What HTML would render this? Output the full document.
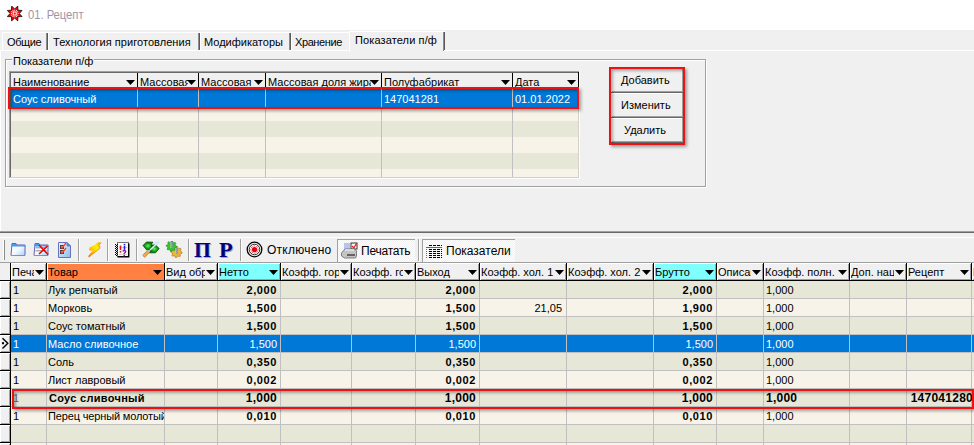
<!DOCTYPE html>
<html><head><meta charset="utf-8"><style>
html,body{margin:0;padding:0;width:974px;height:445px;overflow:hidden;background:#f0f0f0;position:relative}
body>div,body>svg{position:absolute}
.t{font-family:"Liberation Sans", sans-serif;font-size:11px;line-height:13px;white-space:nowrap;color:#000}
</style></head><body>
<div style="left:0px;top:0px;width:974px;height:30px;background:#fff"></div>
<svg style="left:7px;top:6px" width="16" height="16" viewBox="0 0 16 16">
<polygon points="4.64,0.11 7.70,2.90 10.76,0.11 10.95,4.25 15.09,4.44 12.30,7.50 15.09,10.56 10.95,10.75 10.76,14.89 7.70,12.10 4.64,14.89 4.45,10.75 0.31,10.56 3.10,7.50 0.31,4.44 4.45,4.25" fill="#f00" stroke="#000" stroke-width="0.75" stroke-linejoin="miter"/>
<rect x="10.60" y="7.00" width="1" height="1" fill="#fff"/><rect x="10.14" y="8.70" width="1" height="1" fill="#fff"/><rect x="8.90" y="9.94" width="1" height="1" fill="#fff"/><rect x="7.20" y="10.40" width="1" height="1" fill="#fff"/><rect x="5.50" y="9.94" width="1" height="1" fill="#fff"/><rect x="4.26" y="8.70" width="1" height="1" fill="#fff"/><rect x="3.80" y="7.00" width="1" height="1" fill="#fff"/><rect x="4.26" y="5.30" width="1" height="1" fill="#fff"/><rect x="5.50" y="4.06" width="1" height="1" fill="#fff"/><rect x="7.20" y="3.60" width="1" height="1" fill="#fff"/><rect x="8.90" y="4.06" width="1" height="1" fill="#fff"/><rect x="10.14" y="5.30" width="1" height="1" fill="#fff"/>
<rect x="6.2" y="6" width="3" height="3" fill="none" stroke="#fff" stroke-width="1"/>
</svg>
<div class="t" style="left:28px;top:8px;text-align:left;font-size:13px;color:#9d95a6;transform:scaleX(0.86);transform-origin:0 0">01. Рецепт</div>
<div style="left:0px;top:30px;width:974px;height:201px;background:#f0f0f0"></div>
<div style="left:2px;top:32px;width:46px;height:18px;background:#f0f0f0;border-top:1px solid #fff;border-left:1px solid #fff;box-sizing:border-box"></div>
<div style="left:46px;top:33px;width:1px;height:17px;background:#8c8c8c"></div>
<div style="left:47px;top:33px;width:1px;height:17px;background:#5a5a5a"></div>
<div class="t" style="left:7px;top:36px;text-align:left;font-size:11px;letter-spacing:-0.4px">Общие</div>
<div style="left:48px;top:32px;width:152px;height:18px;background:#f0f0f0;border-top:1px solid #fff;border-left:1px solid #fff;box-sizing:border-box"></div>
<div style="left:198px;top:33px;width:1px;height:17px;background:#8c8c8c"></div>
<div style="left:199px;top:33px;width:1px;height:17px;background:#5a5a5a"></div>
<div class="t" style="left:53px;top:36px;text-align:left;font-size:11px;letter-spacing:0.05px">Технология приготовления</div>
<div style="left:200px;top:32px;width:91px;height:18px;background:#f0f0f0;border-top:1px solid #fff;border-left:1px solid #fff;box-sizing:border-box"></div>
<div style="left:289px;top:33px;width:1px;height:17px;background:#8c8c8c"></div>
<div style="left:290px;top:33px;width:1px;height:17px;background:#5a5a5a"></div>
<div class="t" style="left:204px;top:36px;text-align:left;font-size:11px;letter-spacing:0px">Модификаторы</div>
<div style="left:291px;top:32px;width:60px;height:18px;background:#f0f0f0;border-top:1px solid #fff;border-left:1px solid #fff;box-sizing:border-box"></div>
<div class="t" style="left:295px;top:36px;text-align:left;font-size:11px;letter-spacing:-0.4px">Хранение</div>
<div style="left:349px;top:31px;width:96px;height:21px;background:#f0f0f0;border-top:1px solid #fff;border-left:1px solid #fff;box-sizing:border-box"></div>
<div style="left:443px;top:32px;width:1px;height:19px;background:#8c8c8c"></div>
<div style="left:444px;top:32px;width:1px;height:19px;background:#5a5a5a"></div>
<div class="t" style="left:355px;top:34px;text-align:left;font-size:11px;letter-spacing:0.12px">Показатели п/ф</div>
<div style="left:0px;top:50px;width:348px;height:1px;background:#fff"></div>
<div style="left:444px;top:50px;width:530px;height:1px;background:#fff"></div>
<div style="left:0px;top:50px;width:1px;height:181px;background:#fff"></div>
<div style="left:5px;top:59px;width:701px;height:128px;border:1px solid #a0a0a0;box-shadow:inset 1px 1px 0 #fff, 1px 1px 0 #fff;box-sizing:border-box"></div>
<div class="t" style="left:12px;top:55px;text-align:left;font-size:11px;background:#f0f0f0;padding:0 1px;line-height:12px">Показатели п/ф</div>
<div style="left:9px;top:71px;width:571px;height:108px;background:#f7f3e8"></div>
<div style="left:9px;top:71px;width:570px;height:1px;background:#a0a0a0"></div>
<div style="left:9px;top:71px;width:1px;height:107px;background:#a0a0a0"></div>
<div style="left:10px;top:72px;width:569px;height:1px;background:#696969"></div>
<div style="left:10px;top:72px;width:1px;height:106px;background:#696969"></div>
<div style="left:578px;top:72px;width:1px;height:106px;background:#d4d0c8"></div>
<div style="left:10px;top:177px;width:569px;height:1px;background:#d4d0c8"></div>
<div style="left:579px;top:71px;width:1px;height:108px;background:#fff"></div>
<div style="left:9px;top:178px;width:571px;height:1px;background:#fff"></div>
<div style="left:11px;top:73px;width:567px;height:15px;background:#f0f0f0"></div>
<div style="left:11px;top:105px;width:567px;height:16px;background:#f7f3e8"></div>
<div style="left:11px;top:121px;width:567px;height:16px;background:#e6e7d7"></div>
<div style="left:11px;top:137px;width:567px;height:16px;background:#f7f3e8"></div>
<div style="left:11px;top:153px;width:567px;height:16px;background:#e6e7d7"></div>
<div style="left:11px;top:169px;width:567px;height:8px;background:#f7f3e8"></div>
<div style="left:11px;top:89px;width:567px;height:18px;background:#0078d7"></div>
<div style="left:137px;top:89px;width:1px;height:88px;background:#c0c0c0"></div>
<div style="left:137px;top:73px;width:1px;height:16px;background:#000"></div>
<div style="left:198px;top:89px;width:1px;height:88px;background:#c0c0c0"></div>
<div style="left:198px;top:73px;width:1px;height:16px;background:#000"></div>
<div style="left:265px;top:89px;width:1px;height:88px;background:#c0c0c0"></div>
<div style="left:265px;top:73px;width:1px;height:16px;background:#000"></div>
<div style="left:381px;top:89px;width:1px;height:88px;background:#c0c0c0"></div>
<div style="left:381px;top:73px;width:1px;height:16px;background:#000"></div>
<div style="left:512px;top:89px;width:1px;height:88px;background:#c0c0c0"></div>
<div style="left:512px;top:73px;width:1px;height:16px;background:#000"></div>
<div class="t" style="left:13px;top:76px;width:114px;overflow:hidden;text-align:left;font-size:11px">Наименование</div>
<svg style="left:126px;top:80px" width="9" height="5"><polygon points="0,0 9,0 4.5,5" fill="#000"/></svg>
<div class="t" style="left:140px;top:76px;width:48px;overflow:hidden;text-align:left;font-size:11px">Массовая</div>
<svg style="left:187px;top:80px" width="9" height="5"><polygon points="0,0 9,0 4.5,5" fill="#000"/></svg>
<div class="t" style="left:201px;top:76px;width:54px;overflow:hidden;text-align:left;font-size:11px">Массовая</div>
<svg style="left:254px;top:80px" width="9" height="5"><polygon points="0,0 9,0 4.5,5" fill="#000"/></svg>
<div class="t" style="left:268px;top:76px;width:103px;overflow:hidden;text-align:left;font-size:11px">Массовая доля жира</div>
<svg style="left:370px;top:80px" width="9" height="5"><polygon points="0,0 9,0 4.5,5" fill="#000"/></svg>
<div class="t" style="left:384px;top:76px;width:118px;overflow:hidden;text-align:left;font-size:11px">Полуфабрикат</div>
<svg style="left:501px;top:80px" width="9" height="5"><polygon points="0,0 9,0 4.5,5" fill="#000"/></svg>
<div class="t" style="left:515px;top:76px;width:53px;overflow:hidden;text-align:left;font-size:11px">Дата</div>
<svg style="left:567px;top:80px" width="9" height="5"><polygon points="0,0 9,0 4.5,5" fill="#000"/></svg>
<div style="left:11px;top:88px;width:567px;height:1px;background:#000"></div>
<div style="left:578px;top:72px;width:1px;height:17px;background:#000"></div>
<div class="t" style="left:13px;top:93px;text-align:left;font-size:11px;color:#fff">Соус сливочный</div>
<div class="t" style="left:384px;top:93px;text-align:left;font-size:11px;color:#fff">147041281</div>
<div class="t" style="left:515px;top:93px;text-align:left;font-size:11px;color:#fff">01.01.2022</div>
<div style="left:8px;top:87px;width:571px;height:22px;border:2px solid #ee1111;box-sizing:border-box;box-shadow:2px 2px 3px rgba(0,0,0,0.35), inset 2px 2px 3px rgba(0,0,0,0.3)"></div>
<div style="left:611px;top:68px;width:72px;height:25px;background:#f0f0f0;box-shadow:inset 0 -1px 0 #696969, inset -1px 0 0 #a0a0a0, inset 1px 1px 0 #fff, inset 0 -2px 0 #a0a0a0"></div>
<div class="t" style="left:621px;top:74px;text-align:left;font-size:11px">Добавить</div>
<div style="left:611px;top:93px;width:72px;height:25px;background:#f0f0f0;box-shadow:inset 0 -1px 0 #696969, inset -1px 0 0 #a0a0a0, inset 1px 1px 0 #fff, inset 0 -2px 0 #a0a0a0"></div>
<div class="t" style="left:621px;top:99px;text-align:left;font-size:11px">Изменить</div>
<div style="left:611px;top:118px;width:72px;height:25px;background:#f0f0f0;box-shadow:inset 0 -1px 0 #696969, inset -1px 0 0 #a0a0a0, inset 1px 1px 0 #fff, inset 0 -2px 0 #a0a0a0"></div>
<div class="t" style="left:624px;top:124px;text-align:left;font-size:11px">Удалить</div>
<div style="left:609px;top:67px;width:76px;height:78px;border:2px solid #ee1111;box-sizing:border-box;box-shadow:2px 2px 3px rgba(0,0,0,0.35), inset 2px 2px 3px rgba(0,0,0,0.3)"></div>
<div style="left:0px;top:231px;width:974px;height:1px;background:#a0a0a0"></div>
<div style="left:0px;top:232px;width:974px;height:1px;background:#696969"></div>
<div style="left:0px;top:233px;width:974px;height:212px;background:#f0f0f0"></div>
<div style="left:0px;top:237px;width:974px;height:1px;background:#fff"></div>
<div style="left:3px;top:240px;width:1px;height:20px;background:#fff"></div>
<div style="left:4px;top:240px;width:1px;height:20px;background:#8c8c8c"></div>
<div style="left:78px;top:239px;width:1px;height:22px;background:#a0a0a0"></div>
<div style="left:79px;top:239px;width:1px;height:22px;background:#fff"></div>
<div style="left:107px;top:239px;width:1px;height:22px;background:#a0a0a0"></div>
<div style="left:108px;top:239px;width:1px;height:22px;background:#fff"></div>
<div style="left:136px;top:239px;width:1px;height:22px;background:#a0a0a0"></div>
<div style="left:137px;top:239px;width:1px;height:22px;background:#fff"></div>
<div style="left:188px;top:239px;width:1px;height:22px;background:#a0a0a0"></div>
<div style="left:189px;top:239px;width:1px;height:22px;background:#fff"></div>
<div style="left:240px;top:239px;width:1px;height:22px;background:#a0a0a0"></div>
<div style="left:241px;top:239px;width:1px;height:22px;background:#fff"></div>
<div style="left:418px;top:239px;width:1px;height:22px;background:#a0a0a0"></div>
<div style="left:419px;top:239px;width:1px;height:22px;background:#fff"></div>
<svg style="left:10px;top:243px" width="17" height="13" viewBox="0 0 16 13">
<defs><linearGradient id="fg" x1="0" y1="0" x2="1" y2="1"><stop offset="0" stop-color="#fff"/><stop offset="0.5" stop-color="#f4f9ff"/><stop offset="1" stop-color="#a8d2f6"/></linearGradient></defs>
<path d="M1.5,1 v-0.5 h4 l1,1.5 h8 v10 a0.8,0.8 0 0 1 -0.8,0.8 h-12.4 a0.8,0.8 0 0 1 -0.8,-0.8 z" fill="url(#fg)" stroke="#6a60b4" stroke-width="1"/>
<rect x="1" y="1" width="4.5" height="1.5" fill="#3f9cf4"/>
<rect x="1" y="2" width="14" height="1.5" fill="#3f9cf4"/>
</svg>
<svg style="left:33px;top:243px" width="17" height="13" viewBox="0 0 16 13">
<path d="M1.5,1 v-0.5 h4 l1,1.5 h8 v10 a0.8,0.8 0 0 1 -0.8,0.8 h-12.4 a0.8,0.8 0 0 1 -0.8,-0.8 z" fill="url(#fg)" stroke="#6a60b4" stroke-width="1"/>
<rect x="1" y="1" width="4.5" height="1.5" fill="#3f9cf4"/>
<rect x="1" y="2" width="14" height="1.5" fill="#3f9cf4"/>
<path d="M2,4.8 h11 M2,7.8 h11" stroke="#8a8a8a" stroke-width="1"/>
<path d="M5.5,2 L14.5,11.5 M14,3 L5.5,11" stroke="#e80000" stroke-width="1.5"/>
</svg>
<svg style="left:58px;top:242px" width="14" height="16" viewBox="0 0 14 16">
<defs><linearGradient id="dg" x1="0" y1="0" x2="1" y2="1"><stop offset="0" stop-color="#eef6ff"/><stop offset="1" stop-color="#86bfec"/></linearGradient></defs>
<path d="M0.5,0.5 h8.5 l3.5,3.5 v11.5 h-12 z" fill="url(#dg)" stroke="#6a70c0" stroke-width="1"/>
<path d="M9,0.5 v3.5 h3.5 z" fill="#4a8ee8" stroke="#6a70c0" stroke-width="0.8"/>
<rect x="2.5" y="3.5" width="3" height="3" fill="#ddd" stroke="#404040" stroke-width="1"/>
<rect x="2.5" y="8.5" width="3" height="3" fill="#ddd" stroke="#404040" stroke-width="1"/>
<path d="M3,4.5 l1.2,1.5 l3.8,-5 M3,9.5 l1.2,1.5 l3.8,-5" stroke="#ff4020" stroke-width="1.3" fill="none"/>
</svg>
<svg style="left:87px;top:242px" width="15" height="16" viewBox="0 0 15 16">
<defs><linearGradient id="lg" x1="1" y1="0" x2="0" y2="1"><stop offset="0" stop-color="#ff9a10"/><stop offset="0.3" stop-color="#fff000"/><stop offset="0.5" stop-color="#ffd800"/><stop offset="1" stop-color="#ff6a00"/></linearGradient></defs>
<path d="M11,0.3 L14,0.5 L11.5,4 L13,4.6 L12.5,6.8 L8,10.2 L1.8,15.2 L1.2,14 L5.8,8.6 L2.2,8.4 L2.4,5.6 L7.5,3 Z" fill="url(#lg)"/>
<path d="M14,0.5 L11.5,4 L13,4.6 L12.5,6.8 L8,10.2 L1.8,15.2" stroke="#e06a00" stroke-width="0.8" fill="none" opacity="0.7"/>
</svg>
<svg style="left:114px;top:241px" width="17" height="17" viewBox="0 0 17 17">
<rect x="3.5" y="1.5" width="11" height="14" fill="#fff" stroke="#777" stroke-width="1"/>
<path d="M14.7,2.5 V15.7 H3.5" stroke="#000" stroke-width="1.5" fill="none"/>
<path d="M1.5,3 V15" stroke="#000" stroke-width="1" stroke-dasharray="1 1"/>
<path d="M2.5,3 V15" stroke="#000" stroke-width="1" stroke-dasharray="1 1" stroke-dashoffset="1"/>
<path d="M3.5,3 V15" stroke="#000" stroke-width="1" stroke-dasharray="1 1"/>
<path d="M5,6.5 h8 M5,13.5 h8" stroke="#d0d0d0" stroke-width="1"/>
<path d="M6.5,4.5 v4.5" stroke="#f01010" stroke-width="1.6"/><rect x="5.7" y="10" width="1.6" height="1.6" fill="#f01010"/>
<rect x="9.7" y="2.8" width="1.6" height="1.6" fill="#1020f0"/><path d="M10.5,5 v3.8" stroke="#1020f0" stroke-width="1.6"/>
<path d="M8.6,10.3 q1.8,-1.6 3.1,0 q0,1.3 -1.5,2 v0.9" stroke="#9010a0" stroke-width="1.3" fill="none"/><rect x="9.5" y="14" width="1.5" height="1.5" fill="#9010a0"/>
</svg>
<svg style="left:142px;top:241px" width="18" height="17" viewBox="0 0 18 17">
<defs><radialGradient id="gg" cx="0.5" cy="0.5" r="0.5"><stop offset="0" stop-color="#70f070"/><stop offset="0.5" stop-color="#20b020"/><stop offset="1" stop-color="#066006"/></radialGradient></defs>
<path d="M1.5,15.5 L6.5,10.5" stroke="#c07428" stroke-width="3.2"/>
<path d="M1.5,15.5 L6.5,10.5" stroke="#f8aa50" stroke-width="2"/>
<path d="M7,8.5 L15.5,1.8" stroke="#cfe6ff" stroke-width="3.5" stroke-linecap="round"/>
<path d="M1,4.5 L4.5,1 L11,1.2 L9.5,3 L9,8.8 L4.5,8.8 Z" fill="url(#gg)" stroke="#055505" stroke-width="0.8" stroke-linejoin="round"/>
<path d="M17.2,7.5 L13.5,11.8 L7.5,11.8 L8.5,10 L9.5,4 L13.5,4 Z" fill="url(#gg)" stroke="#055505" stroke-width="0.8" stroke-linejoin="round"/>
<path d="M8.5,8.5 L14.5,3" stroke="#d8ecff" stroke-width="1.6" stroke-linecap="round"/>
</svg>
<svg style="left:165px;top:241px" width="19" height="17" viewBox="0 0 19 17">
<polygon points="17.10,11.20 16.99,12.29 15.47,12.85 15.08,13.59 15.46,15.16 14.61,15.86 13.15,15.17 12.34,15.42 11.50,16.80 10.41,16.69 9.85,15.17 9.11,14.78 7.54,15.16 6.84,14.31 7.53,12.85 7.28,12.04 5.90,11.20 6.01,10.11 7.53,9.55 7.92,8.81 7.54,7.24 8.39,6.54 9.85,7.23 10.66,6.98 11.50,5.60 12.59,5.71 13.15,7.23 13.89,7.62 15.46,7.24 16.16,8.09 15.47,9.55 15.72,10.36" fill="#e8b43a" stroke="#b0701a" stroke-width="0.6"/>
<polygon points="11.80,5.20 11.70,6.23 10.20,6.73 9.83,7.42 10.25,8.95 9.44,9.61 8.03,8.90 7.28,9.12 6.50,10.50 5.47,10.40 4.97,8.90 4.28,8.53 2.75,8.95 2.09,8.14 2.80,6.73 2.58,5.98 1.20,5.20 1.30,4.17 2.80,3.67 3.17,2.98 2.75,1.45 3.56,0.79 4.97,1.50 5.72,1.28 6.50,-0.10 7.53,0.00 8.03,1.50 8.72,1.87 10.25,1.45 10.91,2.26 10.20,3.67 10.42,4.42" fill="#36c236" stroke="#1a8a1a" stroke-width="0.6"/>
<rect x="5.5" y="1" width="2" height="6" fill="#c8c8d8"/><rect x="6.5" y="1" width="1" height="6" fill="#707088"/>
<rect x="10.5" y="7" width="2" height="6" fill="#c8c8d8"/><rect x="11.5" y="7" width="1" height="6" fill="#707088"/>
</svg>
<div class="t" style="left:194px;top:240px;text-align:left;font-family:'Liberation Serif',serif;font-weight:bold;font-size:20px;color:#000080;line-height:20px;text-shadow:1px 1px 0 #a8a8b8;transform:scaleX(1.08);transform-origin:0 0">П</div>
<div class="t" style="left:219px;top:240px;text-align:left;font-family:'Liberation Serif',serif;font-weight:bold;font-size:20px;transform:scaleX(1.12);transform-origin:0 0;color:#000080;line-height:20px;text-shadow:1px 1px 0 #a8a8b8">P</div>
<svg style="left:246px;top:241px" width="17" height="17" viewBox="0 0 17 17">
<circle cx="8.5" cy="8.5" r="7.3" fill="#fff" stroke="#000" stroke-width="1.3"/>
<circle cx="8.5" cy="8.5" r="5.3" fill="#fff" stroke="#222" stroke-width="1"/>
<circle cx="8.5" cy="8.5" r="3.6" fill="none" stroke="#e00" stroke-width="0.9" stroke-dasharray="1 0.8"/>
<circle cx="8.5" cy="8.5" r="2.6" fill="#e80010"/>
</svg>
<div class="t" style="left:267px;top:244px;text-align:left;font-size:12px;letter-spacing:0.25px">Отключено</div>
<div style="left:337px;top:239px;width:78px;height:23px;background:repeating-conic-gradient(#fff 0 25%, #f0f0f0 0 50%) 0 0/2px 2px;border-top:1px solid #a0a0a0;border-left:1px solid #a0a0a0;box-sizing:border-box"></div>
<svg style="left:341px;top:242px" width="17" height="17" viewBox="0 0 17 17">
<rect x="3" y="1" width="6" height="6" fill="#b8c4f0"/>
<rect x="10" y="1" width="6" height="6" fill="#fff" stroke="#333" stroke-width="1"/>
<path d="M11,4 l1.8,2 l3,-5" stroke="#e02020" stroke-width="1.3" fill="none"/>
<path d="M0.5,11 L4,7 h10 l1.5,2 v5 l-1,2 h-11 l-3,-2 z" fill="#c4c4c4" stroke="#666" stroke-width="0.8"/>
<path d="M4,8 h9" stroke="#e8e8e8" stroke-width="1.5"/>
<path d="M6,13 h8" stroke="#444" stroke-width="1.5"/>
</svg>
<div class="t" style="left:361px;top:245px;text-align:left;font-size:12px;letter-spacing:-0.22px">Печатать</div>
<div style="left:422px;top:239px;width:93px;height:23px;background:repeating-conic-gradient(#fff 0 25%, #f0f0f0 0 50%) 0 0/2px 2px;border-top:1px solid #a0a0a0;border-left:1px solid #a0a0a0;box-sizing:border-box"></div>
<svg style="left:426px;top:245px" width="16" height="14" viewBox="0 0 16 14">
<path d="M3,0.5 h13 M3,4.5 h13 M3,6.5 h13 M3,8.5 h13 M3,10.5 h13 M3,12.5 h13" stroke="#000" stroke-width="1" stroke-dasharray="3 1"/>
<path d="M0,2.5 h16" stroke="#2070e0" stroke-width="1"/>
<path d="M0.5,4 v10" stroke="#2070e0" stroke-width="1" stroke-dasharray="1 1"/>
</svg>
<div class="t" style="left:446px;top:245px;text-align:left;font-size:12px;letter-spacing:0px">Показатели</div>
<div style="left:0px;top:262px;width:974px;height:1px;background:#a0a0a0"></div>
<div style="left:0px;top:263px;width:974px;height:182px;background:#f7f3e8"></div>
<div style="left:0px;top:263px;width:10px;height:182px;background:#f0f0f0"></div>
<div style="left:11px;top:281px;width:963px;height:17px;background:#e6e7d7"></div>
<div style="left:11px;top:298px;width:963px;height:1px;background:#c0c0c0"></div>
<div style="left:0px;top:281px;width:10px;height:17px;background:#f0f0f0;box-shadow:inset 1px 1px 0 #fff, inset -1px -1px 0 #a0a0a0"></div>
<div style="left:0px;top:298px;width:10px;height:1px;background:#000"></div>
<div style="left:11px;top:299px;width:963px;height:17px;background:#f7f3e8"></div>
<div style="left:11px;top:316px;width:963px;height:1px;background:#c0c0c0"></div>
<div style="left:0px;top:299px;width:10px;height:17px;background:#f0f0f0;box-shadow:inset 1px 1px 0 #fff, inset -1px -1px 0 #a0a0a0"></div>
<div style="left:0px;top:316px;width:10px;height:1px;background:#000"></div>
<div style="left:11px;top:317px;width:963px;height:17px;background:#e6e7d7"></div>
<div style="left:11px;top:334px;width:963px;height:1px;background:#c0c0c0"></div>
<div style="left:0px;top:317px;width:10px;height:17px;background:#f0f0f0;box-shadow:inset 1px 1px 0 #fff, inset -1px -1px 0 #a0a0a0"></div>
<div style="left:0px;top:334px;width:10px;height:1px;background:#000"></div>
<div style="left:11px;top:335px;width:963px;height:17px;background:#f7f3e8"></div>
<div style="left:11px;top:352px;width:963px;height:1px;background:#c0c0c0"></div>
<div style="left:0px;top:335px;width:10px;height:17px;background:#f0f0f0;box-shadow:inset 1px 1px 0 #fff, inset -1px -1px 0 #a0a0a0"></div>
<div style="left:0px;top:352px;width:10px;height:1px;background:#000"></div>
<div style="left:11px;top:353px;width:963px;height:17px;background:#e6e7d7"></div>
<div style="left:11px;top:370px;width:963px;height:1px;background:#c0c0c0"></div>
<div style="left:0px;top:353px;width:10px;height:17px;background:#f0f0f0;box-shadow:inset 1px 1px 0 #fff, inset -1px -1px 0 #a0a0a0"></div>
<div style="left:0px;top:370px;width:10px;height:1px;background:#000"></div>
<div style="left:11px;top:371px;width:963px;height:17px;background:#f7f3e8"></div>
<div style="left:11px;top:388px;width:963px;height:1px;background:#c0c0c0"></div>
<div style="left:0px;top:371px;width:10px;height:17px;background:#f0f0f0;box-shadow:inset 1px 1px 0 #fff, inset -1px -1px 0 #a0a0a0"></div>
<div style="left:0px;top:388px;width:10px;height:1px;background:#000"></div>
<div style="left:11px;top:389px;width:963px;height:17px;background:#e6e7d7"></div>
<div style="left:11px;top:406px;width:963px;height:1px;background:#c0c0c0"></div>
<div style="left:0px;top:389px;width:10px;height:17px;background:#f0f0f0;box-shadow:inset 1px 1px 0 #fff, inset -1px -1px 0 #a0a0a0"></div>
<div style="left:0px;top:406px;width:10px;height:1px;background:#000"></div>
<div style="left:11px;top:407px;width:963px;height:17px;background:#f7f3e8"></div>
<div style="left:11px;top:424px;width:963px;height:1px;background:#c0c0c0"></div>
<div style="left:0px;top:407px;width:10px;height:17px;background:#f0f0f0;box-shadow:inset 1px 1px 0 #fff, inset -1px -1px 0 #a0a0a0"></div>
<div style="left:0px;top:424px;width:10px;height:1px;background:#000"></div>
<div style="left:11px;top:425px;width:963px;height:17px;background:#e6e7d7"></div>
<div style="left:11px;top:442px;width:963px;height:1px;background:#c0c0c0"></div>
<div style="left:0px;top:425px;width:10px;height:17px;background:#f0f0f0;box-shadow:inset 1px 1px 0 #fff, inset -1px -1px 0 #a0a0a0"></div>
<div style="left:0px;top:442px;width:10px;height:1px;background:#000"></div>
<div style="left:11px;top:443px;width:963px;height:17px;background:#f7f3e8"></div>
<div style="left:11px;top:460px;width:963px;height:1px;background:#c0c0c0"></div>
<div style="left:0px;top:443px;width:10px;height:17px;background:#f0f0f0;box-shadow:inset 1px 1px 0 #fff, inset -1px -1px 0 #a0a0a0"></div>
<div style="left:0px;top:460px;width:10px;height:1px;background:#000"></div>
<div style="left:11px;top:335px;width:963px;height:17px;background:#0078d7"></div>
<div style="left:11px;top:263px;width:35px;height:17px;background:#f0f0f0;box-shadow:inset 1px 1px 0 #fff, inset -1px -1px 0 #a0a0a0"></div>
<div class="t" style="left:12px;top:266px;width:22px;overflow:hidden;text-align:left;font-size:11px">Печать</div>
<svg style="left:35px;top:270px" width="9" height="5"><polygon points="0,0 9,0 4.5,5" fill="#000"/></svg>
<div style="left:47px;top:263px;width:117px;height:17px;background:#ff8040;box-shadow:inset 1px 1px 0 #fff, inset -1px -1px 0 #a0a0a0"></div>
<div style="left:46px;top:263px;width:1px;height:17px;background:#000"></div>
<div style="left:46px;top:281px;width:1px;height:164px;background:#c0c0c0"></div>
<div class="t" style="left:48px;top:266px;width:104px;overflow:hidden;text-align:left;font-size:11px">Товар</div>
<svg style="left:153px;top:270px" width="9" height="5"><polygon points="0,0 9,0 4.5,5" fill="#000"/></svg>
<div style="left:165px;top:263px;width:52px;height:17px;background:#f0f0f0;box-shadow:inset 1px 1px 0 #fff, inset -1px -1px 0 #a0a0a0"></div>
<div style="left:164px;top:263px;width:1px;height:17px;background:#000"></div>
<div style="left:164px;top:281px;width:1px;height:164px;background:#c0c0c0"></div>
<div class="t" style="left:166px;top:266px;width:39px;overflow:hidden;text-align:left;font-size:11px">Вид обработки</div>
<svg style="left:206px;top:270px" width="9" height="5"><polygon points="0,0 9,0 4.5,5" fill="#000"/></svg>
<div style="left:218px;top:263px;width:62px;height:17px;background:#80ffff;box-shadow:inset 1px 1px 0 #fff, inset -1px -1px 0 #a0a0a0"></div>
<div style="left:217px;top:263px;width:1px;height:17px;background:#000"></div>
<div style="left:217px;top:281px;width:1px;height:164px;background:#c0c0c0"></div>
<div class="t" style="left:219px;top:266px;width:49px;overflow:hidden;text-align:left;font-size:11px">Нетто</div>
<svg style="left:269px;top:270px" width="9" height="5"><polygon points="0,0 9,0 4.5,5" fill="#000"/></svg>
<div style="left:281px;top:263px;width:70px;height:17px;background:#f0f0f0;box-shadow:inset 1px 1px 0 #fff, inset -1px -1px 0 #a0a0a0"></div>
<div style="left:280px;top:263px;width:1px;height:17px;background:#000"></div>
<div style="left:280px;top:281px;width:1px;height:164px;background:#c0c0c0"></div>
<div class="t" style="left:282px;top:266px;width:57px;overflow:hidden;text-align:left;font-size:11px">Коэфф. горячей</div>
<svg style="left:340px;top:270px" width="9" height="5"><polygon points="0,0 9,0 4.5,5" fill="#000"/></svg>
<div style="left:352px;top:263px;width:63px;height:17px;background:#f0f0f0;box-shadow:inset 1px 1px 0 #fff, inset -1px -1px 0 #a0a0a0"></div>
<div style="left:351px;top:263px;width:1px;height:17px;background:#000"></div>
<div style="left:351px;top:281px;width:1px;height:164px;background:#c0c0c0"></div>
<div class="t" style="left:353px;top:266px;width:50px;overflow:hidden;text-align:left;font-size:11px">Коэфф. гор</div>
<svg style="left:404px;top:270px" width="9" height="5"><polygon points="0,0 9,0 4.5,5" fill="#000"/></svg>
<div style="left:416px;top:263px;width:63px;height:17px;background:#f0f0f0;box-shadow:inset 1px 1px 0 #fff, inset -1px -1px 0 #a0a0a0"></div>
<div style="left:415px;top:263px;width:1px;height:17px;background:#000"></div>
<div style="left:415px;top:281px;width:1px;height:164px;background:#c0c0c0"></div>
<div class="t" style="left:417px;top:266px;width:50px;overflow:hidden;text-align:left;font-size:11px">Выход</div>
<svg style="left:468px;top:270px" width="9" height="5"><polygon points="0,0 9,0 4.5,5" fill="#000"/></svg>
<div style="left:480px;top:263px;width:86px;height:17px;background:#f0f0f0;box-shadow:inset 1px 1px 0 #fff, inset -1px -1px 0 #a0a0a0"></div>
<div style="left:479px;top:263px;width:1px;height:17px;background:#000"></div>
<div style="left:479px;top:281px;width:1px;height:164px;background:#c0c0c0"></div>
<div class="t" style="left:481px;top:266px;width:73px;overflow:hidden;text-align:left;font-size:11px">Коэфф. хол. 1</div>
<svg style="left:555px;top:270px" width="9" height="5"><polygon points="0,0 9,0 4.5,5" fill="#000"/></svg>
<div style="left:567px;top:263px;width:86px;height:17px;background:#f0f0f0;box-shadow:inset 1px 1px 0 #fff, inset -1px -1px 0 #a0a0a0"></div>
<div style="left:566px;top:263px;width:1px;height:17px;background:#000"></div>
<div style="left:566px;top:281px;width:1px;height:164px;background:#c0c0c0"></div>
<div class="t" style="left:568px;top:266px;width:73px;overflow:hidden;text-align:left;font-size:11px">Коэфф. хол. 2</div>
<svg style="left:642px;top:270px" width="9" height="5"><polygon points="0,0 9,0 4.5,5" fill="#000"/></svg>
<div style="left:654px;top:263px;width:62px;height:17px;background:#80ffff;box-shadow:inset 1px 1px 0 #fff, inset -1px -1px 0 #a0a0a0"></div>
<div style="left:653px;top:263px;width:1px;height:17px;background:#000"></div>
<div style="left:653px;top:281px;width:1px;height:164px;background:#c0c0c0"></div>
<div class="t" style="left:655px;top:266px;width:49px;overflow:hidden;text-align:left;font-size:11px">Брутто</div>
<svg style="left:705px;top:270px" width="9" height="5"><polygon points="0,0 9,0 4.5,5" fill="#000"/></svg>
<div style="left:717px;top:263px;width:46px;height:17px;background:#f0f0f0;box-shadow:inset 1px 1px 0 #fff, inset -1px -1px 0 #a0a0a0"></div>
<div style="left:716px;top:263px;width:1px;height:17px;background:#000"></div>
<div style="left:716px;top:281px;width:1px;height:164px;background:#c0c0c0"></div>
<div class="t" style="left:718px;top:266px;width:33px;overflow:hidden;text-align:left;font-size:11px">Описание</div>
<svg style="left:752px;top:270px" width="9" height="5"><polygon points="0,0 9,0 4.5,5" fill="#000"/></svg>
<div style="left:764px;top:263px;width:85px;height:17px;background:#f0f0f0;box-shadow:inset 1px 1px 0 #fff, inset -1px -1px 0 #a0a0a0"></div>
<div style="left:763px;top:263px;width:1px;height:17px;background:#000"></div>
<div style="left:763px;top:281px;width:1px;height:164px;background:#c0c0c0"></div>
<div class="t" style="left:765px;top:266px;width:72px;overflow:hidden;text-align:left;font-size:11px">Коэфф. полн.</div>
<svg style="left:838px;top:270px" width="9" height="5"><polygon points="0,0 9,0 4.5,5" fill="#000"/></svg>
<div style="left:850px;top:263px;width:56px;height:17px;background:#f0f0f0;box-shadow:inset 1px 1px 0 #fff, inset -1px -1px 0 #a0a0a0"></div>
<div style="left:849px;top:263px;width:1px;height:17px;background:#000"></div>
<div style="left:849px;top:281px;width:1px;height:164px;background:#c0c0c0"></div>
<div class="t" style="left:851px;top:266px;width:43px;overflow:hidden;text-align:left;font-size:11px">Доп. наценка</div>
<svg style="left:895px;top:270px" width="9" height="5"><polygon points="0,0 9,0 4.5,5" fill="#000"/></svg>
<div style="left:907px;top:263px;width:64px;height:17px;background:#f0f0f0;box-shadow:inset 1px 1px 0 #fff, inset -1px -1px 0 #a0a0a0"></div>
<div style="left:906px;top:263px;width:1px;height:17px;background:#000"></div>
<div style="left:906px;top:281px;width:1px;height:164px;background:#c0c0c0"></div>
<div class="t" style="left:908px;top:266px;width:51px;overflow:hidden;text-align:left;font-size:11px">Рецепт</div>
<svg style="left:960px;top:270px" width="9" height="5"><polygon points="0,0 9,0 4.5,5" fill="#000"/></svg>
<div style="left:972px;top:263px;width:28px;height:17px;background:#f0f0f0;box-shadow:inset 1px 1px 0 #fff, inset -1px -1px 0 #a0a0a0"></div>
<div style="left:971px;top:263px;width:1px;height:17px;background:#000"></div>
<div style="left:971px;top:281px;width:1px;height:164px;background:#c0c0c0"></div>
<div class="t" style="left:973px;top:266px;width:15px;overflow:hidden;text-align:left;font-size:11px">Ещё</div>
<svg style="left:989px;top:270px" width="9" height="5"><polygon points="0,0 9,0 4.5,5" fill="#000"/></svg>
<div style="left:10px;top:263px;width:1px;height:182px;background:#000"></div>
<div style="left:0px;top:280px;width:974px;height:1px;background:#000"></div>
<div class="t" style="left:13px;top:284px;text-align:left;font-size:11px;color:#000">1</div>
<div class="t" style="left:48px;top:284px;width:116px;overflow:hidden;text-align:left;font-size:11px;color:#000;letter-spacing:0px">Лук репчатый</div>
<div class="t" style="left:217px;top:284px;width:60px;text-align:right;font-size:11px;font-weight:bold;letter-spacing:0.6px;color:#000">2,000</div>
<div class="t" style="left:415px;top:284px;width:61px;text-align:right;font-size:11px;font-weight:bold;letter-spacing:0.6px;color:#000">2,000</div>
<div class="t" style="left:653px;top:284px;width:60px;text-align:right;font-size:11px;font-weight:bold;letter-spacing:0.6px;color:#000">2,000</div>
<div class="t" style="left:766px;top:284px;text-align:left;font-size:11px;color:#000">1,000</div>
<div class="t" style="left:13px;top:302px;text-align:left;font-size:11px;color:#000">1</div>
<div class="t" style="left:48px;top:302px;width:116px;overflow:hidden;text-align:left;font-size:11px;color:#000;letter-spacing:0px">Морковь</div>
<div class="t" style="left:217px;top:302px;width:60px;text-align:right;font-size:11px;font-weight:bold;letter-spacing:0.6px;color:#000">1,500</div>
<div class="t" style="left:415px;top:302px;width:61px;text-align:right;font-size:11px;font-weight:bold;letter-spacing:0.6px;color:#000">1,500</div>
<div class="t" style="left:653px;top:302px;width:60px;text-align:right;font-size:11px;font-weight:bold;letter-spacing:0.6px;color:#000">1,900</div>
<div class="t" style="left:479px;top:302px;width:83px;text-align:right;font-size:11px;color:#000">21,05</div>
<div class="t" style="left:766px;top:302px;text-align:left;font-size:11px;color:#000">1,000</div>
<div class="t" style="left:13px;top:320px;text-align:left;font-size:11px;color:#000">1</div>
<div class="t" style="left:48px;top:320px;width:116px;overflow:hidden;text-align:left;font-size:11px;color:#000;letter-spacing:0px">Соус томатный</div>
<div class="t" style="left:217px;top:320px;width:60px;text-align:right;font-size:11px;font-weight:bold;letter-spacing:0.6px;color:#000">1,500</div>
<div class="t" style="left:415px;top:320px;width:61px;text-align:right;font-size:11px;font-weight:bold;letter-spacing:0.6px;color:#000">1,500</div>
<div class="t" style="left:653px;top:320px;width:60px;text-align:right;font-size:11px;font-weight:bold;letter-spacing:0.6px;color:#000">1,500</div>
<div class="t" style="left:766px;top:320px;text-align:left;font-size:11px;color:#000">1,000</div>
<div class="t" style="left:13px;top:338px;text-align:left;font-size:11px;color:#fff">1</div>
<div class="t" style="left:48px;top:338px;width:116px;overflow:hidden;text-align:left;font-size:11px;color:#fff;letter-spacing:0px">Масло сливочное</div>
<div class="t" style="left:217px;top:338px;width:60px;text-align:right;font-size:11px;color:#fff">1,500</div>
<div class="t" style="left:415px;top:338px;width:61px;text-align:right;font-size:11px;color:#fff">1,500</div>
<div class="t" style="left:653px;top:338px;width:60px;text-align:right;font-size:11px;color:#fff">1,500</div>
<div class="t" style="left:766px;top:338px;text-align:left;font-size:11px;color:#fff">1,000</div>
<div class="t" style="left:13px;top:356px;text-align:left;font-size:11px;color:#000">1</div>
<div class="t" style="left:48px;top:356px;width:116px;overflow:hidden;text-align:left;font-size:11px;color:#000;letter-spacing:0px">Соль</div>
<div class="t" style="left:217px;top:356px;width:60px;text-align:right;font-size:11px;font-weight:bold;letter-spacing:0.6px;color:#000">0,350</div>
<div class="t" style="left:415px;top:356px;width:61px;text-align:right;font-size:11px;font-weight:bold;letter-spacing:0.6px;color:#000">0,350</div>
<div class="t" style="left:653px;top:356px;width:60px;text-align:right;font-size:11px;font-weight:bold;letter-spacing:0.6px;color:#000">0,350</div>
<div class="t" style="left:766px;top:356px;text-align:left;font-size:11px;color:#000">1,000</div>
<div class="t" style="left:13px;top:374px;text-align:left;font-size:11px;color:#000">1</div>
<div class="t" style="left:48px;top:374px;width:116px;overflow:hidden;text-align:left;font-size:11px;color:#000;letter-spacing:0px">Лист лавровый</div>
<div class="t" style="left:217px;top:374px;width:60px;text-align:right;font-size:11px;font-weight:bold;letter-spacing:0.6px;color:#000">0,002</div>
<div class="t" style="left:415px;top:374px;width:61px;text-align:right;font-size:11px;font-weight:bold;letter-spacing:0.6px;color:#000">0,002</div>
<div class="t" style="left:653px;top:374px;width:60px;text-align:right;font-size:11px;font-weight:bold;letter-spacing:0.6px;color:#000">0,002</div>
<div class="t" style="left:766px;top:374px;text-align:left;font-size:11px;color:#000">1,000</div>
<div class="t" style="left:13px;top:392px;text-align:left;font-size:11px;color:#6a6a8a">1</div>
<div class="t" style="left:49px;top:392px;text-align:left;font-size:11px;font-weight:bold;letter-spacing:0.3px">Соус сливочный</div>
<div class="t" style="left:217px;top:392px;width:60px;text-align:right;font-size:12px;font-weight:bold;letter-spacing:0.25px">1,000</div>
<div class="t" style="left:415px;top:392px;width:61px;text-align:right;font-size:12px;font-weight:bold;letter-spacing:0.25px">1,000</div>
<div class="t" style="left:653px;top:392px;width:60px;text-align:right;font-size:12px;font-weight:bold;letter-spacing:0.25px">1,000</div>
<div class="t" style="left:766px;top:392px;text-align:left;font-size:12px;font-weight:bold;letter-spacing:0.25px">1,000</div>
<div class="t" style="left:904px;top:392px;width:69px;text-align:right;font-size:12px;font-weight:bold;letter-spacing:0.25px">147041280</div>
<div class="t" style="left:13px;top:410px;text-align:left;font-size:11px;color:#000">1</div>
<div class="t" style="left:48px;top:410px;width:116px;overflow:hidden;text-align:left;font-size:11px;color:#000;letter-spacing:-0.15px">Перец черный молотый</div>
<div class="t" style="left:217px;top:410px;width:60px;text-align:right;font-size:11px;font-weight:bold;letter-spacing:0.6px;color:#000">0,010</div>
<div class="t" style="left:415px;top:410px;width:61px;text-align:right;font-size:11px;font-weight:bold;letter-spacing:0.6px;color:#000">0,010</div>
<div class="t" style="left:653px;top:410px;width:60px;text-align:right;font-size:11px;font-weight:bold;letter-spacing:0.6px;color:#000">0,010</div>
<div class="t" style="left:766px;top:410px;text-align:left;font-size:11px;color:#000">1,000</div>
<svg style="left:0px;top:337px" width="10" height="13" viewBox="0 0 10 13"><path d="M2.5,1.2 L7.8,6.3 L2.5,11.5" stroke="#000" stroke-width="1.4" fill="none"/><rect x="2" y="5.2" width="2" height="2" fill="#000"/></svg>
<div style="left:12px;top:389px;width:962px;height:20px;border:2px solid #ee1111;box-sizing:border-box;box-shadow:2px 2px 3px rgba(0,0,0,0.35), inset 2px 2px 3px rgba(0,0,0,0.3)"></div>
</body></html>
